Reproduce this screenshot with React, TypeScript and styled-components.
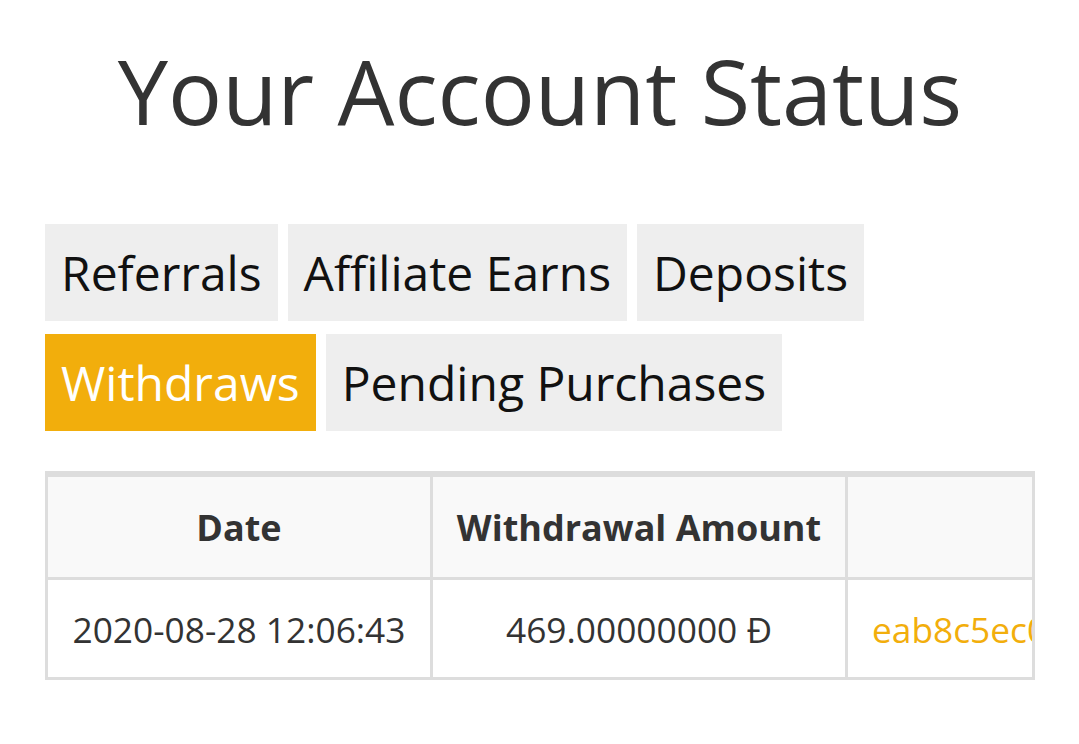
import React, { useState } from "react";
import styled, { createGlobalStyle } from "styled-components";

const GlobalStyle = createGlobalStyle`
  * { box-sizing: border-box; }
  body {
    margin: 0;
    background: #fff;
    font-family: "Open Sans", "Noto Sans", sans-serif;
    color: #333;
  }
`;

const tabs = ["Referrals", "Affiliate Earns", "Deposits", "Withdraws", "Pending Purchases"];

const withdrawals = [
  {
    date: "2020-08-28 12:06:43",
    amount: "469.00000000 Đ",
    tx: "eab8c5ec0f6d31a2c9b47e8a1f3d5c6b7e9a0d2f4c6b8a1e3d5f7a9c0b2d4e6f",
  },
];

export default function App() {
  const [active, setActive] = useState("Withdraws");

  return (
    <Page>
      <GlobalStyle />
      <Title>Your Account Status</Title>
      <TabList>
        {tabs.map(tab => (
          <Tab key={tab} active={tab === active} onClick={() => setActive(tab)}>
            {tab}
          </Tab>
        ))}
      </TabList>
      <TableWrap>
        <Table>
          <thead>
            <tr>
              <HeadCell width={385}>Date</HeadCell>
              <HeadCell width={415}>Withdrawal Amount</HeadCell>
              <HeadCell width={1400} last />
            </tr>
          </thead>
          <tbody>
            {withdrawals.map(row => (
              <tr key={row.tx}>
                <Cell>{row.date}</Cell>
                <Cell>{row.amount}</Cell>
                <LinkCell last>
                  <TxLink href="#">{row.tx}</TxLink>
                </LinkCell>
              </tr>
            ))}
          </tbody>
        </Table>
      </TableWrap>
    </Page>
  );
}

const Page = styled.div`
  padding: 0 44px 40px 45px;
`;

const Title = styled.h1`
  margin: 0;
  padding-top: 28px;
  text-align: center;
  font-size: 90px;
  font-weight: 400;
  line-height: 124px;
  color: #333;
`;

const TabList = styled.div`
  display: flex;
  flex-wrap: wrap;
  gap: 13px 10px;
  margin-top: 72px;
`;

const Tab = styled.button<{ active?: boolean }>`
  height: 97px;
  padding: 0 16px;
  border: 0;
  border-radius: 0;
  font-family: inherit;
  font-size: 48px;
  font-weight: 400;
  cursor: pointer;
  background: ${p => (p.active ? "#f2ae0c" : "#eeeeee")};
  color: ${p => (p.active ? "#fff" : "#111")};
`;

const TableWrap = styled.div`
  margin-top: 40px;
  border: 3px solid #dddddd;
  border-top-width: 6px;
  overflow: hidden;
`;

const Table = styled.table`
  border-collapse: separate;
  border-spacing: 0;
  table-layout: fixed;
  width: 2200px;
  font-size: 35.3px;
`;

const HeadCell = styled.th<{ width: number; last?: boolean }>`
  width: ${p => p.width}px;
  height: 103px;
  padding: 0 12px;
  background: #f9f9f9;
  font-size: 36px;
  font-weight: 700;
  text-align: center;
  white-space: nowrap;
  color: #333;
  border-bottom: 3px solid #dddddd;
  border-right: ${p => (p.last ? "0" : "3px solid #dddddd")};
`;

const Cell = styled.td<{ last?: boolean }>`
  height: 97px;
  padding: 0 24px;
  text-align: center;
  color: #333;
  white-space: nowrap;
  border-right: ${p => (p.last ? "0" : "3px solid #dddddd")};
`;

const LinkCell = styled(Cell)`
  text-align: left;
`;

const TxLink = styled.a`
  color: #f2ae0c;
  text-decoration: none;
`;
